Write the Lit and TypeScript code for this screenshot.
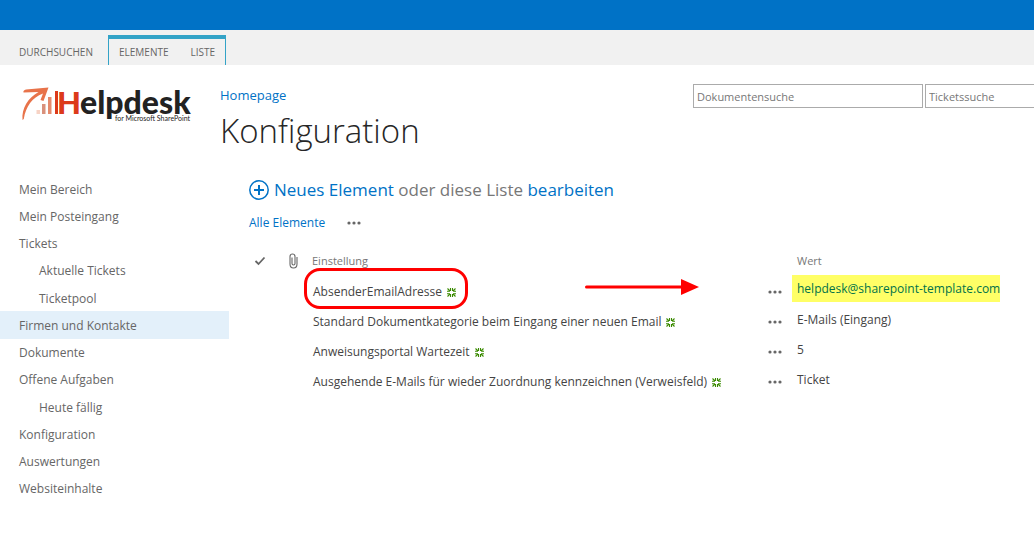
import { LitElement, html, css, svg } from "lit";
import { customElement } from "lit/decorators.js";
import { classMap } from "lit/directives/class-map.js";

interface NavItem {
  label: string;
  sub?: boolean;
  active?: boolean;
}

interface Row {
  name: string;
  value: string;
  marked?: boolean;
}

const NAV: NavItem[] = [
  { label: "Mein Bereich" },
  { label: "Mein Posteingang" },
  { label: "Tickets" },
  { label: "Aktuelle Tickets", sub: true },
  { label: "Ticketpool", sub: true },
  { label: "Firmen und Kontakte", active: true },
  { label: "Dokumente" },
  { label: "Offene Aufgaben" },
  { label: "Heute fällig", sub: true },
  { label: "Konfiguration" },
  { label: "Auswertungen" },
  { label: "Websiteinhalte" },
];

const ROWS: Row[] = [
  { name: "AbsenderEmailAdresse", value: "helpdesk@sharepoint-template.com", marked: true },
  { name: "Standard Dokumentkategorie beim Eingang einer neuen Email", value: "E-Mails (Eingang)" },
  { name: "Anweisungsportal Wartezeit", value: "5" },
  { name: "Ausgehende E-Mails für wieder Zuordnung kennzeichnen (Verweisfeld)", value: "Ticket" },
];

const dots = html`<svg width="14" height="4" viewBox="0 0 14 4" aria-hidden="true">
  ${[2, 7, 12].map((x) => svg`<circle cx=${x} cy="2" r="1.6" fill="#666" />`)}
</svg>`;

const newBadge = html`<svg width="9" height="9" viewBox="0 0 9 9" role="img" aria-label="Neu">
  <path d="M.5 .5L3 3M8.500 .5L6 3M.5 8.500L3 6M8.500 8.500L6 6M3.500 0V3M5.500 0V3M3.500 9V6M5.500 9V6M0 3.300H3M6 3.300H9M0 5.700H3M6 5.700H9" stroke="#3a8a00" stroke-width="1.100" fill="none" />
  <rect x="3" y="3" width="3" height="3" fill="#fff" />
</svg>`;

@customElement("app-root")
export class AppRoot extends LitElement {
  static styles = css`
    :host {
      display: block;
      min-height: 100vh;
      overflow: hidden;
      background: #fff;
      color: #444;
      font: 12px/20px "Open Sans", "Noto Sans", sans-serif;
    }
    * {
      box-sizing: border-box;
    }
    a {
      color: inherit;
      text-decoration: none;
    }
    button {
      border: 0;
      padding: 0;
      background: none;
      font: inherit;
      color: inherit;
      display: flex;
      align-items: center;
    }
    svg {
      display: block;
      flex: none;
    }
    .suite {
      height: 30px;
      background: #0072c6;
    }
    .ribbon {
      display: flex;
      height: 35px;
      padding: 5px 0 0 8px;
      background: #f1f1f1;
      font-size: 10px;
      color: #666;
    }
    .ribbon a {
      padding: 3px 11px 0;
    }
    .browse {
      width: 100px;
      padding-top: 4px;
    }
    .browse a {
      display: block;
    }
    .group {
      display: flex;
      border: 1px solid #33a3c7;
      border-top-width: 4px;
      border-bottom: 0;
    }
    .group a {
      padding: 3px 10px 0;
    }
    .group a + a {
      padding-left: 12px;
    }
    .head {
      display: flex;
      height: 98px;
    }
    .logo {
      flex: none;
      width: 220px;
      padding: 11px 0 0 20px;
    }
    .titles {
      flex: 1;
      padding-top: 20px;
    }
    .crumb {
      display: block;
      font-size: 13px;
      color: #0072c6;
    }
    h1 {
      margin: 0;
      font-size: 33px;
      line-height: 52px;
      font-weight: 300;
      color: #262626;
    }
    .search {
      display: flex;
      gap: 2px;
      padding-top: 19px;
      margin-right: -121px;
    }
    .search input {
      width: 230px;
      height: 24px;
      padding: 0 3px;
      border: 1px solid #ababab;
      border-radius: 0;
      background: #fff;
      font: 11px "Open Sans", sans-serif;
      color: #777;
    }
    .search input::placeholder {
      color: #777;
      opacity: 1;
    }
    .body {
      display: flex;
    }
    .nav {
      flex: none;
      width: 229px;
      padding-top: 12px;
    }
    .nav ul {
      display: grid;
      grid-auto-rows: 1fr;
      min-height: 327px;
      margin: 0;
      padding: 0;
      list-style: none;
      color: #666;
    }
    .nav a {
      display: flex;
      align-items: center;
      height: 100%;
      padding: 2px 0 0 19px;
    }
    .nav .sub a {
      padding-left: 39px;
    }
    .nav .active {
      background: #e3f0fa;
    }
    main {
      flex: 1;
      padding: 13px 0 0 20px;
    }
    .create {
      display: flex;
      align-items: center;
      height: 28px;
      gap: 5px;
      font-size: 17px;
      color: #777;
    }
    .create a,
    .views a {
      color: #0072c6;
    }
    .views {
      display: flex;
      align-items: center;
      gap: 22px;
      height: 37px;
    }
    .list {
      position: relative;
      margin-top: 1px;
    }
    table {
      width: 100%;
      table-layout: fixed;
      border-collapse: collapse;
    }
    th,
    td {
      padding: 0;
      height: 30px;
      text-align: left;
      white-space: nowrap;
      font-weight: 400;
    }
    th {
      height: 35px;
      padding-top: 2px;
      font-size: 11px;
      color: #777;
    }
    .c-check {
      width: 35px;
    }
    .c-clip {
      width: 28px;
    }
    .c-menu {
      width: 24px;
    }
    .c-value {
      width: 242px;
    }
    .pad {
      padding-left: 5px;
    }
    .name {
      display: flex;
      align-items: center;
      gap: 5px;
      padding-left: 1px;
    }
    .val {
      display: block;
      width: max-content;
      padding-left: 5px;
      margin-bottom: 4px;
    }
    .val.marked {
      margin: -2px 0 5px;
      line-height: 27px;
      background: #ffff66;
      color: #00724a;
    }
    td {
      line-height: 18px;
    }
    .ring,
    .arrow {
      position: absolute;
      pointer-events: none;
    }
    .ring {
      left: 55px;
      top: 26px;
      width: 164px;
      height: 41px;
      border: 3px solid #f00;
      border-radius: 16px;
    }
    .arrow {
      left: 335px;
      top: 36px;
    }
  `;

  private logo() {
    return html`<svg width="176" height="54" viewBox="20 76 176 54" role="img" aria-label="Helpdesk for Microsoft SharePoint">
      <path d="M22.500 120C21.500 108 28 98 38.500 92L23.500 92.500C23 91 24 90 26 89.500L48.500 87.500L43.500 101L40.500 100L43 93.500C32 98 26 106 23.800 119Z" fill="#e8734a" />
      <rect x="36.500" y="110" width="3.500" height="4" fill="#f7d3c5" />
      <rect x="42" y="104" width="3.500" height="10" fill="#d9917c" />
      <rect x="48" y="97" width="3.500" height="17" fill="#e58a6c" />
      <rect x="55" y="91" width="3" height="23" fill="#dc3a1a" />
      <text x="57" y="114" font-family="Lato, sans-serif" font-weight="900" font-size="31" fill="#dc3a1a">H</text>
      <text x="80" y="114" font-family="Lato, sans-serif" font-weight="900" font-size="32" fill="#222">elpdesk</text>
      <text x="115" y="121" font-family="Lato, sans-serif" font-size="7" fill="#222">for Microsoft SharePoint</text>
    </svg>`;
  }

  render() {
    return html`
      <div class="suite"></div>
      <nav class="ribbon" aria-label="Menüband">
        <div class="browse"><a href="#">DURCHSUCHEN</a></div>
        <div class="group"><a href="#">ELEMENTE</a><a href="#">LISTE</a></div>
      </nav>
      <header class="head">
        <a class="logo" href="#">${this.logo()}</a>
        <div class="titles">
          <a class="crumb" href="#">Homepage</a>
          <h1>Konfiguration</h1>
        </div>
        <form class="search">
          <input type="text" aria-label="Dokumentensuche" placeholder="Dokumentensuche" />
          <input type="text" aria-label="Ticketssuche" placeholder="Ticketssuche" />
        </form>
      </header>
      <div class="body">
        <nav class="nav" aria-label="Navigation">
          <ul>
            ${NAV.map(
              (n) => html`<li class=${classMap({ sub: !!n.sub, active: !!n.active })}><a href="#">${n.label}</a></li>`
            )}
          </ul>
        </nav>
        <main>
          <div class="create">
            <svg width="20" height="20" viewBox="0 0 20 20" aria-hidden="true">
              <circle cx="10" cy="10" r="9.200" fill="none" stroke="#0072c6" stroke-width="1.500" />
              <path d="M10 5V15M5 10H15" stroke="#0072c6" stroke-width="2" />
            </svg>
            <span><a href="#">Neues Element</a> oder diese Liste <a href="#">bearbeiten</a></span>
          </div>
          <div class="views">
            <a href="#">Alle Elemente</a>
            <button type="button" aria-label="Weitere Ansichten">${dots}</button>
          </div>
          <div class="list">
            <table>
              <colgroup>
                <col class="c-check" />
                <col class="c-clip" />
                <col />
                <col class="c-menu" />
                <col class="c-value" />
              </colgroup>
              <thead>
                <tr>
                  <th class="pad">
                    <svg width="12" height="10" viewBox="0 0 12 10" role="img" aria-label="Auswahl">
                      <path d="M1.500 5L4.500 8L10.500 1.500" fill="none" stroke="#666" stroke-width="1.800" />
                    </svg>
                  </th>
                  <th class="pad">
                    <svg width="9" height="16" viewBox="0 0 9 16" role="img" aria-label="Anlagen">
                      <path d="M3 4.500V10.500Q3 12 4.500 12T6 10.500V3.500Q6 1 3.500 1T1 3.500V11Q1 15 4.500 15T8 11V4" fill="none" stroke="#666" stroke-width="1.100" />
                    </svg>
                  </th>
                  <th>Einstellung</th>
                  <th></th>
                  <th class="pad">Wert</th>
                </tr>
              </thead>
              <tbody>
                ${ROWS.map(
                  (r) => html`<tr>
                    <td></td>
                    <td></td>
                    <td><span class="name"><a href="#">${r.name}</a>${newBadge}</span></td>
                    <td><button type="button" aria-label="Menü öffnen">${dots}</button></td>
                    <td><span class=${classMap({ val: true, marked: !!r.marked })}>${r.value}</span></td>
                  </tr>`
                )}
              </tbody>
            </table>
            <div class="ring"></div>
            <svg class="arrow" width="116" height="18" viewBox="0 0 116 18" aria-hidden="true">
              <path d="M2.500 9H98" stroke="#f00" stroke-width="3" stroke-linecap="round" />
              <path d="M97 1L115 9L97 17Z" fill="#f00" />
            </svg>
          </div>
        </main>
      </div>
    `;
  }
}
